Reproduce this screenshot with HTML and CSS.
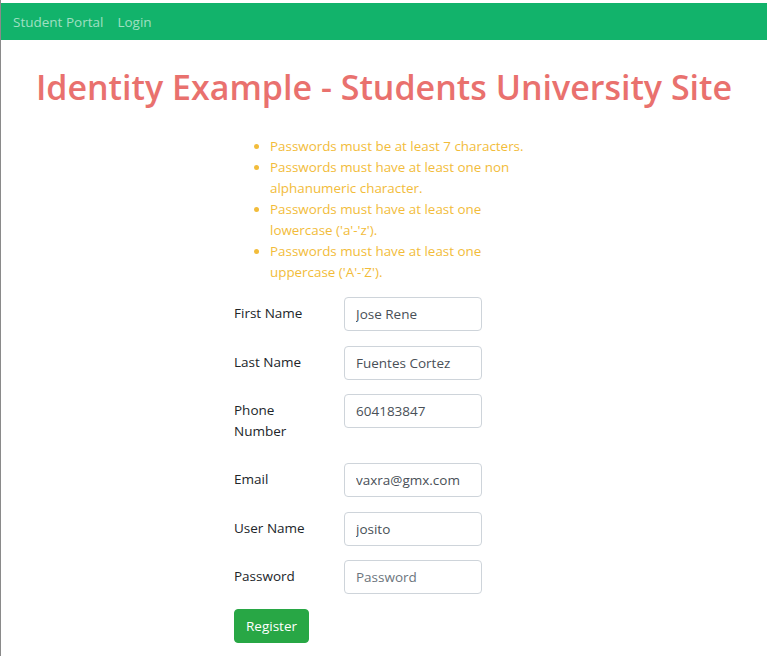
FILE: index.html
```html
<!DOCTYPE html>
<html lang="en">
<head>
<meta charset="utf-8">
<title>Register</title>
<link rel="stylesheet" href="styles.css">
</head>
<body>
<nav class="navbar">
  <a class="brand" href="#">Student Portal</a>
  <a class="nav-link" href="#">Login</a>
</nav>
<main class="content">
  <h1 class="title">Identity Example - Students University Site</h1>
  <div class="form-wrap">
    <ul class="errors">
      <li>Passwords must be at least 7 characters.</li>
      <li>Passwords must have at least one non alphanumeric character.</li>
      <li>Passwords must have at least one lowercase ('a'-'z').</li>
      <li>Passwords must have at least one uppercase ('A'-'Z').</li>
    </ul>
    <form class="form">
      <div class="row"><label class="label">First Name</label><input class="input" type="text" value="Jose Rene"></div>
      <div class="row"><label class="label">Last Name</label><input class="input" type="text" value="Fuentes Cortez"></div>
      <div class="row"><label class="label">Phone<br>Number</label><input class="input" type="text" value="604183847"></div>
      <div class="row"><label class="label">Email</label><input class="input" type="text" value="vaxra@gmx.com"></div>
      <div class="row"><label class="label">User Name</label><input class="input" type="text" value="josito"></div>
      <div class="row"><label class="label">Password</label><input class="input" type="password" placeholder="Password"></div>
      <button class="btn" type="button">Register</button>
    </form>
  </div>
</main>
</body>
</html>
```
FILE: styles.css
```css
html { font-size: 14px; }
* { box-sizing: border-box; }
body {
  margin: 0;
  min-height: 100vh;
  border-left: 1px solid #8a8a8a;
  background: #fff;
  font-family: "Open Sans", "Noto Sans", sans-serif;
  color: #212529;
  padding-top: 3px;
}
.navbar {
  height: 37px;
  background: #12b36b;
  display: flex;
  align-items: center;
  padding-left: 12px;
  gap: 14px;
}
.navbar a {
  color: rgba(255,255,255,0.6);
  text-decoration: none;
  font-size: 13.5px;
}
.content { padding-top: 20px; }
.title {
  margin: 0;
  text-align: center;
  color: #e9716e;
  font-weight: 600;
  font-size: 34px;
  line-height: 54px;
}
.form-wrap {
  width: 300px;
  margin: 22px auto 0;
}
.errors {
  margin: 0 0 14px;
  padding-left: 36px;
  color: #f2bc3a;
  font-size: 13.4px;
  line-height: 21px;
}
.row {
  display: flex;
  align-items: flex-start;
  margin-bottom: 14.5px;
}
.label {
  width: 110px;
  font-size: 13.5px;
  line-height: 21px;
  padding: 6.25px 0;
}
.input {
  width: 138px;
  height: 34px;
  border: 1px solid #ced4da;
  border-radius: 4px;
  padding: 5px 11px;
  font-family: inherit;
  font-size: 13.5px;
  color: #495057;
}
.input::placeholder { color: #6c757d; }
.btn {
  background: #28a745;
  color: #fff;
  border: 1px solid #28a745;
  border-radius: 4px;
  height: 34px;
  padding: 0 11px;
  font-family: inherit;
  font-size: 13.5px;
}
```
